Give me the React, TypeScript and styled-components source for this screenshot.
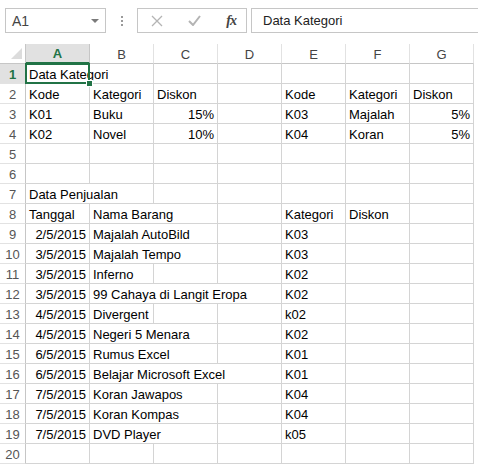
import React from "react";
import styled, { createGlobalStyle } from "styled-components";

const GlobalStyle = createGlobalStyle`
  body {
    margin: 0;
    background: #fff;
    font-family: "Liberation Sans", Arial, sans-serif;
  }
`;

const Wrapper = styled.div`
  width: 478px;
  height: 467px;
  overflow: hidden;
  background: #fff;
`;

const Toolbar = styled.div`
  display: flex;
  align-items: flex-start;
  height: 44px;
  padding: 8px 0 0 5px;
  box-sizing: border-box;
`;

const NameBox = styled.div`
  width: 101px;
  height: 25px;
  box-sizing: border-box;
  border: 1px solid #c6c6c6;
  display: flex;
  align-items: center;
  justify-content: space-between;
  padding: 0 6px 0 6px;
  font-size: 14px;
  color: #444;
`;

const Caret = styled.span`
  width: 0;
  height: 0;
  border-left: 4px solid transparent;
  border-right: 4px solid transparent;
  border-top: 4px solid #7a7a7a;
  margin-top: 1px;
`;

const Grip = styled.div`
  width: 31px;
  height: 25px;
  display: flex;
  flex-direction: column;
  align-items: center;
  justify-content: center;
  gap: 2px;

  span {
    width: 2px;
    height: 2px;
    background: #9a9a9a;
  }
`;

const FxButtons = styled.div`
  width: 110px;
  height: 25px;
  box-sizing: border-box;
  border: 1px solid #c6c6c6;
  display: flex;
  align-items: center;
  padding: 0 10px 0 13px;
  justify-content: space-between;
`;

const Fx = styled.span`
  font-family: "Liberation Serif", "Times New Roman", serif;
  font-style: italic;
  font-weight: bold;
  font-size: 14px;
  color: #444;
  letter-spacing: -1px;
`;

const FormulaInput = styled.div`
  flex: 1;
  height: 25px;
  box-sizing: border-box;
  border: 1px solid #c6c6c6;
  border-right: none;
  margin-left: 4px;
  padding-left: 11px;
  display: flex;
  align-items: center;
  font-size: 13px;
  color: #222;
`;

const Sheet = styled.div`
  display: grid;
  grid-template-columns: 26px repeat(7, 64px);
  grid-auto-rows: 20px;
`;

const Corner = styled.div`
  box-sizing: border-box;
  border-right: 1px solid #c6c6c6;
  border-bottom: 1px solid #c6c6c6;
  display: flex;
  align-items: flex-end;
  justify-content: flex-end;
  padding: 0 3px 4px 0;

  &::after {
    content: "";
    width: 0;
    height: 0;
    border-left: 11px solid transparent;
    border-bottom: 11px solid #dcdcdc;
  }
`;

const ColHeader = styled.div<{ $active?: boolean }>`
  box-sizing: border-box;
  border-right: 1px solid ${(p) => (p.$active ? "#c6c6c6" : "#e2e2e2")};
  border-bottom: ${(p) => (p.$active ? "2px solid #217346" : "1px solid #c6c6c6")};
  background: ${(p) => (p.$active ? "#e1e1e1" : "#fff")};
  color: ${(p) => (p.$active ? "#217346" : "#444")};
  font-weight: ${(p) => (p.$active ? "bold" : "normal")};
  font-size: 13px;
  display: flex;
  align-items: center;
  justify-content: center;
  padding-top: 1px;
`;

const RowHeader = styled.div<{ $active?: boolean }>`
  box-sizing: border-box;
  border-right: 1px solid #c6c6c6;
  border-bottom: 1px solid #e2e2e2;
  background: ${(p) => (p.$active ? "#e1e1e1" : "#fff")};
  color: ${(p) => (p.$active ? "#217346" : "#555")};
  font-weight: ${(p) => (p.$active ? "bold" : "normal")};
  font-size: 13px;
  display: flex;
  align-items: center;
  justify-content: center;
  padding-top: 1px;
`;

const Cell = styled.div<{ $right?: boolean; $span?: number }>`
  position: relative;
  grid-column: span ${(p) => p.$span ?? 1};
  box-sizing: border-box;
  border-right: 1px solid #d4d4d4;
  border-bottom: 1px solid #d4d4d4;
  padding: 0 3px;
  font-size: 13px;
  line-height: 21px;
  color: #000;
  white-space: nowrap;
  text-align: ${(p) => (p.$right ? "right" : "left")};
`;

const Selection = styled.div`
  position: absolute;
  left: -1px;
  top: -1px;
  width: 65px;
  height: 21px;
  box-sizing: border-box;
  border: 2px solid #217346;
  z-index: 1;

  &::after {
    content: "";
    position: absolute;
    right: -5px;
    bottom: -5px;
    width: 5px;
    height: 5px;
    background: #217346;
    border: 1px solid #fff;
  }
`;

type C = { t?: string; r?: boolean; s?: number };
const e: C = {};
const blank = (): C[] => [e, e, e, e, e, e, e];

const sale = (date: string, name: string, span: number, code: string): C[] => {
  const filler: C[] = Array.from({ length: 3 - span }, () => e);
  return [{ t: date, r: true }, { t: name, s: span }, ...filler, { t: code }, e, e];
};

const rows: C[][] = [
  [{ t: "Data Kategori" }, e, e, e, e, e, e],
  [{ t: "Kode" }, { t: "Kategori" }, { t: "Diskon" }, e, { t: "Kode" }, { t: "Kategori" }, { t: "Diskon" }],
  [{ t: "K01" }, { t: "Buku" }, { t: "15%", r: true }, e, { t: "K03" }, { t: "Majalah" }, { t: "5%", r: true }],
  [{ t: "K02" }, { t: "Novel" }, { t: "10%", r: true }, e, { t: "K04" }, { t: "Koran" }, { t: "5%", r: true }],
  blank(),
  blank(),
  [{ t: "Data Penjualan", s: 2 }, e, e, e, e, e],
  [{ t: "Tanggal" }, { t: "Nama Barang", s: 2 }, e, { t: "Kategori" }, { t: "Diskon" }, e],
  sale("2/5/2015", "Majalah AutoBild", 2, "K03"),
  sale("3/5/2015", "Majalah Tempo", 2, "K03"),
  sale("3/5/2015", "Inferno", 1, "K02"),
  sale("3/5/2015", "99 Cahaya di Langit Eropa", 3, "K02"),
  sale("4/5/2015", "Divergent", 1, "k02"),
  sale("4/5/2015", "Negeri 5 Menara", 2, "K02"),
  sale("6/5/2015", "Rumus Excel", 2, "K01"),
  sale("6/5/2015", "Belajar Microsoft Excel", 3, "K01"),
  sale("7/5/2015", "Koran Jawapos", 2, "K04"),
  sale("7/5/2015", "Koran Kompas", 2, "K04"),
  sale("7/5/2015", "DVD Player", 2, "k05"),
  blank(),
];

const columns = ["A", "B", "C", "D", "E", "F", "G"];

export default function App() {
  return (
    <Wrapper>
      <GlobalStyle />
      <Toolbar>
        <NameBox>
          <span>A1</span>
          <Caret />
        </NameBox>
        <Grip>
          <span />
          <span />
          <span />
        </Grip>
        <FxButtons>
          <svg width="12" height="12" viewBox="0 0 12 12">
            <path d="M1 1 L11 11 M11 1 L1 11" stroke="#b4b4b4" strokeWidth="1.3" fill="none" />
          </svg>
          <svg width="13" height="11" viewBox="0 0 13 11">
            <path d="M1 6 L5 10 L12 1" stroke="#b4b4b4" strokeWidth="2" fill="none" />
          </svg>
          <Fx>fx</Fx>
        </FxButtons>
        <FormulaInput>Data Kategori</FormulaInput>
      </Toolbar>
      <Sheet>
        <Corner />
        {columns.map((c) => (
          <ColHeader key={c} $active={c === "A"}>
            {c}
          </ColHeader>
        ))}
        {rows.map((row, i) => (
          <React.Fragment key={i}>
            <RowHeader $active={i === 0}>{i + 1}</RowHeader>
            {row.map((cell, j) => (
              <Cell key={j} $right={cell.r} $span={cell.s}>
                {cell.t}
                {i === 0 && j === 0 && <Selection />}
              </Cell>
            ))}
          </React.Fragment>
        ))}
      </Sheet>
    </Wrapper>
  );
}
